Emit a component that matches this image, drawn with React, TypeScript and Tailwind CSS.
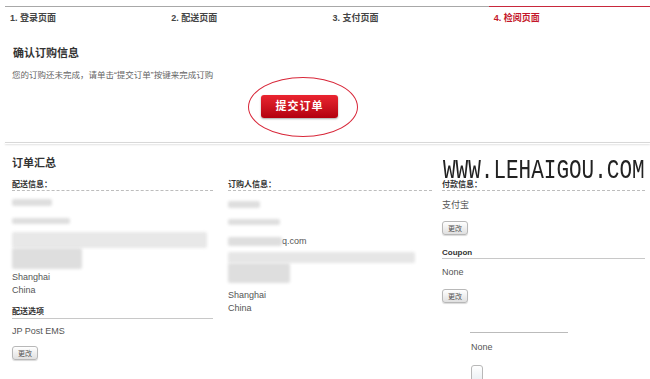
import React from 'react';

const steps = ['1. 登录页面', '2. 配送页面', '3. 支付页面', '4. 检阅页面'];

const SmallButton: React.FC = () => (
  <div className="w-[26px] h-[14px] rounded-[3px] border border-[#b8b8b8] bg-linear-to-b from-white to-[#e0e0e0] shadow-[0_1px_1px_rgba(0,0,0,0.15)] flex items-center justify-center text-[7px] leading-none text-[#555]">
    更改
  </div>
);

const SectionTitle: React.FC<{ label: string }> = ({ label }) => (
  <div className="text-[8px] leading-[11px] font-bold text-[#333] border-b border-dashed border-[#bdbdbd]">{label}</div>
);

const Blur: React.FC<{ className: string }> = ({ className }) => (
  <div className={`bg-[#dedede] blur-[1.5px] rounded-[2px] ${className}`} />
);

const App: React.FC = () => {
  return (
    <div
      className="relative w-full h-[379px] overflow-hidden bg-white text-[#555]"
      style={{ fontFamily: '"Liberation Sans", "Noto Sans CJK SC", sans-serif' }}
    >
      {/* steps */}
      <div className="pt-[6px] pl-[5px] grid grid-cols-4">
        {steps.map((s, i) => (
          <div
            key={i}
            className={`border-t pt-[6px] pl-[5px] text-[9px] leading-[11px] font-bold ${
              i === 3 ? 'border-[#c8283c] text-[#c4162a]' : 'border-[#a8a8a8] text-[#444]'
            }`}
          >
            {s}
          </div>
        ))}
      </div>

      <div className="mt-[22px] px-[13px] text-[11px] leading-[14px] font-bold text-[#333]">确认订购信息</div>
      <div className="mt-[10px] px-[12px] text-[8.5px] leading-[11px] text-[#666]">
        您的订购还未完成，请单击“提交订单”按键来完成订购
      </div>

      <div className="relative mt-[14px] ml-[261px] w-[77px] h-[23px]">
        <div className="absolute left-[-13px] top-[-18px] w-[110px] h-[60px] rounded-[50%] border-[1.5px] border-[#d8283a]" />
        <div className="relative w-full h-full rounded-[3px] bg-linear-to-b from-[#ea2430] to-[#b3000e] shadow-[0_1px_2px_rgba(0,0,0,0.35)] flex items-center justify-center text-white text-[11px] font-bold tracking-[1px]">
          提交订单
        </div>
      </div>

      <div className="mt-[24px] ml-[5px] border-t border-[#d8d8d8] h-[2px] shadow-[0_1px_2px_rgba(0,0,0,0.12)]" />

      <div className="mt-[12px] px-[12px] text-[11px] leading-[14px] font-bold text-[#333]">订单汇总</div>

      <div className="mt-[9px] pl-[12px] flex items-start text-[9px] leading-[13px]">
        {/* col 1 */}
        <div className="w-[201px] shrink-0 flex flex-col">
          <SectionTitle label="配送信息：" />
          <Blur className="mt-[8px] h-[7px] w-[40px]" />
          <Blur className="mt-[12px] h-[6px] w-[58px]" />
          <Blur className="mt-[8px] h-[16px] w-[195px] bg-[#e8e8e8]" />
          <Blur className="h-[21px] w-[70px]" />
          <div className="mt-[2px]">Shanghai</div>
          <div>China</div>
          <div className="mt-[9px] text-[8px] leading-[11px] font-bold text-[#333] border-b border-[#c8c8c8] pb-[1px]">配送选项</div>
          <div className="mt-[6px]">JP Post EMS</div>
          <div className="mt-[8px]">
            <SmallButton />
          </div>
        </div>

        {/* col 2 */}
        <div className="ml-[15px] w-[204px] shrink-0 flex flex-col">
          <SectionTitle label="订购人信息：" />
          <Blur className="mt-[10px] h-[7px] w-[32px]" />
          <Blur className="mt-[11px] h-[6px] w-[52px]" />
          <div className="mt-[11px] h-[10px] flex items-center">
            <Blur className="h-[9px] w-[54px]" />
            <span>q.com</span>
          </div>
          <Blur className="mt-[6px] h-[11px] w-[187px] bg-[#e6e6e6]" />
          <Blur className="h-[20px] w-[62px]" />
          <div className="mt-[6px]">Shanghai</div>
          <div>China</div>
        </div>

        {/* col 3 */}
        <div className="relative ml-[10px] w-[203px] shrink-0 flex flex-col">
          <SectionTitle label="付款信息：" />
          <div
            className="absolute left-[1px] top-[-14px] text-[21px] leading-[20px] text-[#222] scale-y-[1.35] origin-bottom-left whitespace-nowrap"
            style={{ fontFamily: '"Liberation Mono", monospace' }}
          >
            WWW.LEHAIGOU.COM
          </div>
          <div className="mt-[8px]">支付宝</div>
          <div className="mt-[9px]">
            <SmallButton />
          </div>
          <div className="mt-[12px] text-[8px] leading-[11px] font-bold text-[#333] border-b border-[#c8c8c8]">Coupon</div>
          <div className="mt-[7px]">None</div>
          <div className="mt-[10px]">
            <SmallButton />
          </div>
          <div className="mt-[29px] ml-[28px] w-[98px] border-t border-[#bbb]" />
          <div className="mt-[8px] ml-[29px]">None</div>
          <div className="mt-[11px] ml-[29px] w-[12px] h-[18px] rounded-[3px] border border-[#b8b8b8] bg-linear-to-b from-white to-[#e8eef2]" />
        </div>
      </div>
    </div>
  );
};

export default App;
